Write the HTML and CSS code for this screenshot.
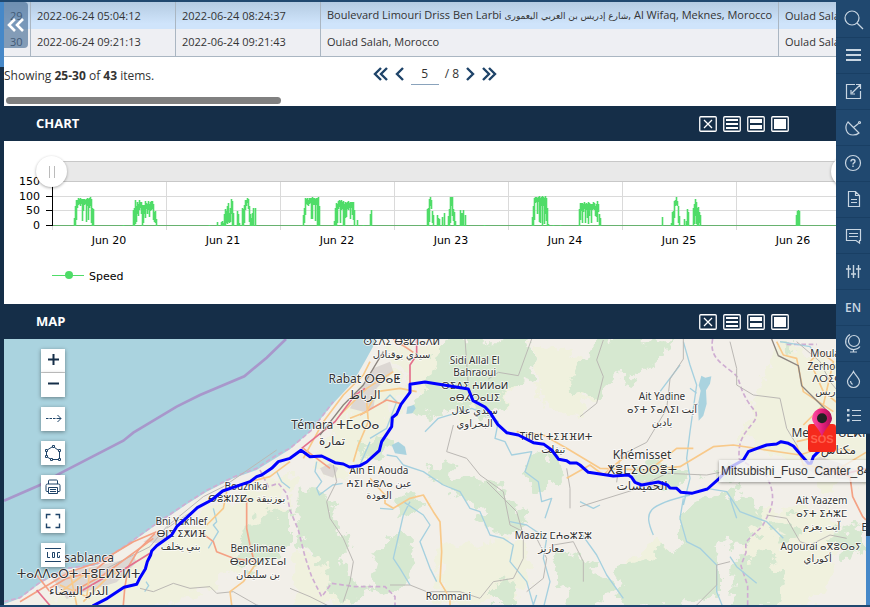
FILE: index.html
```html
<!DOCTYPE html>
<html lang="en">
<head>
<meta charset="utf-8">
<title>Trips report</title>
<link rel="stylesheet" href="styles.css">
</head>
<body>
<div class="app">
  <main class="content">
    <section class="report">
      <div class="table-wrap">
        <table class="trips">
          <colgroup><col class="c-num"><col class="c-time"><col class="c-time"><col class="c-address"><col class="c-address"></colgroup>
          <tbody>
            <tr class="selected"><td>29</td><td>2022-06-24 05:04:12</td><td>2022-06-24 08:24:37</td><td>Boulevard Limouri Driss Ben Larbi <span class="ar">شارع إدريس بن العربي اليعمورى</span>, Al Wifaq, Meknes, Morocco</td><td>Oulad Salah, Morocco</td></tr>
            <tr><td>30</td><td>2022-06-24 09:21:13</td><td>2022-06-24 09:21:43</td><td>Oulad Salah, Morocco</td><td>Oulad Salah, Morocco</td></tr>
          </tbody>
        </table>
      </div>
      <div class="table-foot">
        <p class="summary">Showing <b>25-30</b> of <b>43</b> items.</p>
        <nav class="pager" aria-label="Pages">
          <button aria-label="First page"><svg width="16" height="14"><path d="M8 1 2 7l6 6M14 1 8 7l6 6"/></svg></button>
          <button aria-label="Previous page"><svg width="10" height="14"><path d="M8 1 2 7l6 6"/></svg></button>
          <input type="text" value="5" aria-label="Page">
          <span>/ 8</span>
          <button aria-label="Next page"><svg width="10" height="14"><path d="m2 1 6 6-6 6"/></svg></button>
          <button aria-label="Last page"><svg width="16" height="14"><path d="m2 1 6 6-6 6M8 1l6 6-6 6"/></svg></button>
        </nav>
      </div>
      <div class="scroll-track"><div class="scroll-thumb"></div></div>
    </section>

    <header class="bar">
      <h2>CHART</h2>
      <div class="bar-tools">
        <button aria-label="Close chart"><svg width="18" height="16"><rect x=".75" y=".75" width="16.5" height="14.5" rx="1"/><path d="m5 4 8 8m0-8-8 8"/></svg></button>
        <button aria-label="Small chart"><svg width="18" height="16"><rect x=".75" y=".75" width="16.5" height="14.5" rx="1"/><path class="solid" d="M3 3h12v2H3zM3 7h12v2H3zM3 11h12v2H3z"/></svg></button>
        <button aria-label="Half chart"><svg width="18" height="16"><rect x=".75" y=".75" width="16.5" height="14.5" rx="1"/><path class="solid" d="M3 3h12v4H3zM3 9h12v4H3z"/></svg></button>
        <button aria-label="Full chart"><svg width="18" height="16"><rect x=".75" y=".75" width="16.5" height="14.5" rx="1"/><path class="solid" d="M3 3h12v10H3z"/></svg></button>
      </div>
    </header>
    <section class="chart">
      <svg class="plot" role="img" aria-label="Speed by day">
        <rect class="range" x="48" y="20" width="794" height="20"/>
        <path class="range-edge" d="M48 20.5H862M48 40.5H862"/>
        <path class="grid" d="M48 55.5H862M48 69.5H862M48.5 85v4M162.500 41v48M276.500 41v48M390.500 41v48M504.500 41v48M618.500 41v48M732.500 41v48"/>
        <path class="zero" d="M48 84.500H862"/>
        <path class="axis" d="M48.500 40V85M42 55.500h6M42 69.500h6M42 84.500h6"/>
        <g transform="translate(48.500 85) scale(1 -1)">
          <path class="speed" d="M22 0V8M23 0V20M24 6V26M25 18V26M26 21V28M27 22V27M28 20V28M29 22V27M30 5V27M31 15V27M32 21V27M33 22V26M34 4V27M35 20V28M36 6V27M37 18V28M38 20V29M39 3V27M40 0V18M41 0V17"/>
          <path class="speed" d="M71 0V1M81 0V16M82 0V18M83 2V26M84 4V20M85 12V24M86 10V22M87 16V26M88 18V24M89 12V24M90 0V21M91 3V21M92 12V21M93 8V25M94 17V23M95 12V22M96 16V25M97 9V22M98 15V24M99 16V25M100 17V25M101 6V22M102 4V14M103 3V15M104 0V7"/>
          <path class="speed" d="M157 0V1M165 0V4M169 0V4M170 0V5M171 0V3M172 0V12M173 0V17M174 3V15M175 2V20M176 4V23M177 3V13M178 4V18M179 12V27M180 0V25M181 0V13M185 0V15M186 0V12M187 0V3M190 0V18M191 0V17M192 3V21M193 16V26M194 20V26M195 23V28M196 17V27M197 4V20M198 0V12M199 0V8M200 0V13M201 0V18M203 0V18"/>
          <path class="speed" d="M251 0V11M252 3V18M253 11V28M254 22V27M255 21V28M256 20V26M257 22V28M258 23V28M259 7V28M260 7V29M261 21V28M262 21V28M263 5V27M264 21V28M265 0V28M266 0V29M267 0V20"/>
          <path class="speed" d="M282 0V5M283 0V18M284 0V23M285 3V22M286 17V25M287 19V26M288 3V25M289 16V26M290 17V24M291 0V25M292 0V22M293 8V24M294 9V23M295 17V24M296 16V25M297 18V23M298 7V24M299 18V24M300 11V24M301 6V24M302 0V16M305 0V6M311 0V1M318 0V12M319 0V16"/>
          <path class="speed" d="M375 0V17M376 0V18M377 4V27M378 20V29M379 17V26M380 3V15M381 0V11M385 0V11M386 0V8M387 0V7M390 0V9M392 0V13M396 0V10M397 0V17M398 3V29M399 20V29M400 10V29M401 5V17M402 0V14M403 0V5M408 0V16M409 0V13M410 0V13M411 0V16M413 0V11M432 0V1"/>
          <path class="speed" d="M480 0V9M481 0V20M482 6V28M483 23V29M484 24V29M485 12V28M486 24V29M487 4V30M488 3V28M489 20V29M490 0V30M491 20V29M492 2V28M493 12V30M494 5V28M495 0V18M496 0V2M501 0V1M508 0V1"/>
          <path class="speed" d="M527 0V17M528 6V23M529 15V23M530 3V23M531 14V22M532 17V24M533 3V22M534 16V23M535 8V22M536 2V24M537 10V23M538 16V22M539 3V22M540 16V22M541 17V24M542 16V23M543 10V20M544 9V22M545 4V25M546 14V22M547 0V12M548 0V8"/>
          <path class="speed" d="M610 0V9M619 0V3M620 0V14M621 0V15M622 8V25M623 20V26M624 21V29M625 20V25M626 3V20M627 0V10M632 0V7M634 0V5M635 0V17M636 0V14M641 0V18M642 2V22M643 10V27M644 2V24M645 0V18M646 0V19M647 3V14M648 0V11M744 0V11M745 0V15M746 0V16M747 0V15"/>
        </g>
        <g class="ticks-y"><text x="36" y="44">150</text><text x="36" y="59">100</text><text x="36" y="73">50</text><text x="36" y="88">0</text></g>
        <g class="ticks-x"><text x="105" y="103">Jun 20</text><text x="219" y="103">Jun 21</text><text x="333" y="103">Jun 22</text><text x="447" y="103">Jun 23</text><text x="561" y="103">Jun 24</text><text x="675" y="103">Jun 25</text><text x="789" y="103">Jun 26</text></g>
        <path class="legend-line" d="M48 134.500h32"/><circle class="dot" cx="65" cy="134" r="4"/>
        <text x="85" y="139">Speed</text>
      </svg>
      <button class="grip grip-start" aria-label="Range start"></button>
      <button class="grip grip-end" aria-label="Range end"></button>
    </section>

    <header class="bar">
      <h2>MAP</h2>
      <div class="bar-tools">
        <button aria-label="Close map"><svg width="18" height="16"><rect x=".75" y=".75" width="16.5" height="14.5" rx="1"/><path d="m5 4 8 8m0-8-8 8"/></svg></button>
        <button aria-label="Small map"><svg width="18" height="16"><rect x=".75" y=".75" width="16.5" height="14.5" rx="1"/><path class="solid" d="M3 3h12v2H3zM3 7h12v2H3zM3 11h12v2H3z"/></svg></button>
        <button aria-label="Half map"><svg width="18" height="16"><rect x=".75" y=".75" width="16.5" height="14.5" rx="1"/><path class="solid" d="M3 3h12v4H3zM3 9h12v4H3z"/></svg></button>
        <button aria-label="Full map"><svg width="18" height="16"><rect x=".75" y=".75" width="16.5" height="14.5" rx="1"/><path class="solid" d="M3 3h12v10H3z"/></svg></button>
      </div>
    </header>
    <section class="map">
      <svg class="map-canvas" viewBox="12 12 2586 798" preserveAspectRatio="xMinYMin slice" role="img" aria-label="Route map">
        <defs>
          <linearGradient id="pin" x1="0" x2="1"><stop offset="0" stop-color="#ff4fa3"/><stop offset=".55" stop-color="#e01e79"/><stop offset="1" stop-color="#a80f58"/></linearGradient>
          <filter id="soft"><feTurbulence type="fractalNoise" baseFrequency=".022" numOctaves="4" seed="4"/><feDisplacementMap in="SourceGraphic" scale="95" xChannelSelector="R" yChannelSelector="G"/></filter>
        </defs>
        <path class="land" d="M0 812 60 790 120 745 200 702 290 690 370 640 460 575 560 508 620 470 700 430 770 405 870 343 930 290 1000 205 1060 140 1100 70 1138 0H2620V830H0z"/>
        <g class="farm" filter="url(#soft)">
          <path d="M170 790 400 670 580 560 720 480 870 410 860 570 740 640 660 740 500 830H90zM940 360l124-170 100-90 60 60-60 120-80 100-100 60zM1150 30h280l120 60-40 110-120 40-140-70zM1600 20l130 30 60 120-60 80-100-40zM900 650l110 10 60 90-20 60H880zM1300 640l240-30 60 80-80 120h-200zM2340 20l260 100v320l-150 20-120-90-110-60z"/>
          <path d="M2210 540l260-20 60 90-90 210h-180zM1950 600l60 60-40 60-90-20z"/>
        </g>
        <g class="wood" filter="url(#soft)">
          <path d="M720 600l70-70 80 0v100l-60 20-60 60-50-40zM890 455l90 15 30 50-20 40 60 50-20 80 50 50-20 60-60-20-30-90-60-40-20-100zM1075 330l60-30 50 10-30 60-60 20zM1240 210l60-100 30-100h260l20 80-80 50-60 110-80-50-100 50zM1340 95l100-60 110 20 60 70-60 40-130 0z"/>
          <path d="M1180 500l60-30 30 40-60 40zM1290 390l140 50-30 60-60-30zM1370 420l150 40 60 110-70 40-80-80zM1580 370l80-20 40 70-70 60-60-50zM1130 660l70-70 50 50-20 100-80 40-50-20zM1020 760l60-30 20 40-50 40zM1470 740l60-20 20 90h-80zM1680 650l90 30 60 80-30 60h-80l-60-110z"/>
          <path d="M1750 60l90-50 180 0-40 60-70 70-60-20-60 70-90-20zM1890 390l110-20 80 60-90 40-90-30zM2050 520l70-40 60 10 40-30 60 70-20 90-80 0-40 60-90-20-30-80zM1860 700l120-40 70-30 110 30 0 100-80 60h-180l-60-60zM2200 670l100-20 60 90-40 80h-130zM2150 410l80-10-30 40zM2480 600l110-20 10 60-60 30zM2330 20l50 10-20 30zM2310 560l60-10 40 60-60 10z"/>
        </g>
        <g class="town"><path d="M150 720l70-15 60-10 90-20 30-15 10 22-60 60-100 30-50 20zM1050 220l30-60 40-60 50-20 10 30-50 50-10 60-30 10zM960 400l30-15 25 15-15 28-30-10zM430 620l50-30 40-10-40 45zM1920 440l60-5 20 25-50 5zM2400 390l60-25 60 20 50 20-20 30-90-10z"/></g>

        <g class="boundary"><path d="M12 800 60 788 120 742 200 700 290 688 370 636 460 572 560 504 620 466 700 426 770 400 830 360 870 340 935 285 1000 200M780 405l25 50 30-10 25 30 10 50 25 60 20 80 20 60 30 60 30-40 70 10 90 0 30 30v30M2138 12c-10 50 20 70 60 100 30 20 10 50 70 120 10 40-60 50-50 140l80 50c40 70 10 110-10 150-60 60-50 40-50 80l-15 40 20 60v60M2360 28l90 0"/></g>
        <path class="maritime" d="M12 497 120 450 180 415 370 317 400 293 530 215 600 180 733 124 800 68 858 12"/>
        <g class="water">
          <path d="M640 520l10 40-10 10 15 20-30 50M830 410l15 30 25 20M438 740l8 12-12 18"/>
          <path d="M950 380l-5 30 20 30-15 20 8 20 40-30 30-5M1275 290l40-40 100-30 50 20 30 20-10 50 30 10 20 40 60-10-20 60 40 30 10 60 30-10-20 60M1160 360l30 5 20 25 60 20 60 40 50 20 30 50 30 10 30 70 40 10 30 20-10 50 50 60 20 70 10-30M1230 500l-20 40-30 130 20 30 30 50M1210 500l60 40 20 30-30 50 30 80 20 40M1530 560l50 10 60 40-10 60 20 70-20 80M1140 520l40 3M1110 320l-30 70M1150 200l20-20 20 20-30 80-50 30"/>
          <path d="M2050 20l20 70 20 60-20 140-10 80 10 60-20 80M2040 90l-60 80M2070 160l20 15M1960 600c-30-70-20-90 110-120M2050 490l-10 60 20 70 40 20 50 50 0 80 20 50M2120 460l60 10 40 60 80 30 50 50M2190 490l20 60M2190 665l20 30 60 50M1740 590l50 70 30 60 50 70M1800 510l-20 10-40-20M2340 20l90 15 20 30"/>
        </g>
        <g class="lake"><path d="M2104 122l12 6 18-4-4 22-12 20 2 40-10 36-14 15-2-50 8-40-6-16zM1222 215l20-5 5 10-10 15-18 2zM1175 330l20-10 20 15 5 25-35-5z"/></g>
        <g class="minor">
          <path d="M300 710l90-45 60-30 50-60 110-90 60-30 160-110M500 580l120-80M420 760l40 10 60-25 50 15 60-5 20 20 50-5 70 40 40 10"/>
          <path d="M1000 390l10 50-30 60 10 50 40 60 30 70-10 60-20 60M870 760l60 25 60 30M1170 750l60 0 50 20 100 0 60 20 40-50 60-10 30-60 0-70-20-70-90-90M1395 12l10 140M1595 12l-40 110-60-10-30 20M1360 270l-20 80 60 20 40 50 70 50 20 100 80 40 30 60-10 60-50 40M1660 630l60-10 30 60 0 60M1700 400l10 60 0 60"/>
          <path d="M1810 15l-20 60 20 50-20 80-50 40M2050 12v60l-40 60-10 90-60 100-80 40-10 80M2190 20l20 80 0 50 50 30 80 10 20 90 30 50M1740 515l160-50 100-50 120 5 50-10M2300 540l60 10 40 70 30 10 60-30 50 10M2150 690l0 60-60 60M2150 690l40-10M2540 200l-50-60-30-60-70-60"/>
        </g>
        <g class="roads">
          <path class="primary" d="M370 810l5-60M375 755l10-60 30-50 50-50M600 590l40 30 10 30 50 20 70 10M740 490v90l10 50 15 60M150 770l-40-50M1080 240l80-45 40 10M1180 12l60 40M910 340l80 60M2500 405l50 20 8 60 30 60 10 10"/>
          <path class="primary" d="M60 800l150-90 90-30 100-60 70-30M200 780l110-60 150-110M150 760l50-30 80-20 60-50"/>
          <path class="secondary" d="M765 690l-35 50-40 30 5 40M620 570l50-50 10-50M750 440l60-15 60-45M1060 380l15-50 30-70-5-60M1110 430l45 50 0 25 25 15 50-30 40-10 30 50 20 30 5 90-5 90 30 50v40M1700 430l70-40 40 30 70-60"/>
          <path class="secondary" d="M1550 290l80 10 70 40 100 60 130 5 110-10 100-60 60-5 200 30 60-20 90 5M1930 420l100-80 50 0M2390 320l130-30 60 0M2390 330l20 60 100 15 100-60M2520 210l-50-40-40-90 30-30 40 30-30 130-60 60M2330 20l20 40 40 10 20 100 90 60"/>
          <path class="secondary" d="M170 780l80-60 50 10 60-20M180 750l90 40M210 710l20 100M270 700l-10 90M350 700l-100 100M910 370l60-110 60-80 60-60 20-40M1020 240l80-80 80-50M1050 250l50-20 30-60 70-10 50 10"/>
          <path class="motorway" d="M110 765l60 70M360 710l90-55M240 770l70-40M905 340l100-80 60-80 30-20M1230 150v-60l20-30 0-50M2480 400l40 20 80-20"/>
        </g>
        <g class="rail"><path d="M2315 12l20 50 60 30 10 60 50 50 30 30M1150 50l-60 100-60 60-70 90"/></g>

        <g class="label">
          <text class="city" x="246" y="680">Casablanca</text><text class="city" x="236" y="729">ⵜⴰⴷⴷⴰⵔⵜ ⵜⵓⵎⵍⵉⵍⵜ</text><text class="city" x="236" y="780">الدار البيضاء</text>
          <text x="544" y="570">Bni Yakhlef</text><text x="544" y="607">ⴱⵏⵉ ⵉⵅⵍⴼ</text><text x="542" y="645">بني يخلف</text>
          <text x="738" y="464">Bouznika</text><text x="740" y="501">ⴱⵓⵣⵏⵉⵇⴰ بوزنيقة</text>
          <text x="774" y="652">Benslimane</text><text x="774" y="690">ⴱⴰⵏⵙⵍⵉⵎⴰⵏ</text><text x="774" y="728">بن سليمان</text>
          <text x="1205" y="31">ⵙⵉⴷⵉ ⴱⵓⵇⵏⴰⴷⵍ</text><text x="1205" y="70">سيدي بوقنادل</text>
          <text class="city" x="1094" y="143">Rabat ⵔⴱⴰⵟ</text><text class="city" x="1094" y="193">الرباط</text>
          <text class="city" x="1006" y="283">Témara ⵜⵎⴰⵔⴰ</text><text class="city" x="996" y="330">تمارة</text>
          <text x="1137" y="416">Ain El Aouda</text><text x="1137" y="455">ⵄⵉⵏ ⵄⵓⴷⴰ عين</text><text x="1137" y="492">العودة</text>
          <text x="1424" y="86">Sidi Allal El</text><text x="1424" y="124">Bahraoui</text><text x="1424" y="162">ⵙⵉⴷⵉ ⵄⵍⵍⴰⵍ</text><text x="1424" y="199">ⴰⴱⵃⵔⴰⵡⵉ</text><text x="1424" y="237">سيدي علال</text><text x="1424" y="276">البحراوي</text>
          <text x="1668" y="315">Tiflet ⵜⵉⴼⴼⵍⵜ</text><text x="1660" y="354">تيفلت</text>
          <text class="city" x="1926" y="373">Khémisset</text><text class="city" x="1926" y="418">ⵅⴻⵎⵉⵙⵙⴻⵜ</text><text class="city" x="1926" y="466">الخميسات</text>
          <text x="1986" y="196">Ait Yadine</text><text x="1986" y="234">ⴰⵢⵜ ⵢⴰⴷⵉⵏ آيت</text><text x="1986" y="272">يادين</text>
          <text x="1660" y="612">Maaziz ⵎⵄⴰⵣⵉⵣ</text><text x="1654" y="651">معازيز</text>
          <text x="1345" y="794">Rommani</text>
          <text x="2483" y="66">Moulay</text><text x="2483" y="104">Zerhoun</text><text x="2483" y="141">ⴷⵔⵉⵙ</text><text x="2483" y="181">دريس</text>
          <text class="city" x="2513" y="307">Meknes ⴰⵎⴽⵏⴰⵙ</text><text class="city" x="2515" y="358">مكناس</text>
          <text x="2465" y="508">Ait Yaazem</text><text x="2465" y="547">ⴰⵢⵜ ⵉⵄⵣⵎ</text><text x="2465" y="585">آيت يعزم</text>
          <text x="2463" y="644">Agourai ⴰⴳⵓⵔⴰⵢ</text><text x="2453" y="682">أكوراي</text><text x="2597" y="587">El</text>
        </g>
        <path class="route" d="M280 812 322 790 372 757 410 748 420 728 436 702 442 680 452 660 455 648 470 632 515 600 530 575 560 548 592 518 635 495 668 468 750 440 770 425 785 420 815 400 835 380 870 370 903 346 930 365 965 363 1005 383 1030 387 1048 396 1080 392 1100 381 1138 347 1145 320 1175 275 1177 248 1190 237 1203 208 1230 172 1230 148 1275 141 1350 153 1405 162 1419 197 1455 216 1470 232 1493 268 1520 293 1555 300 1600 323 1632 328 1655 345 1676 373 1700 377 1710 384 1730 384 1740 390 1765 412 1840 423 1885 420 1895 427 1905 442 1925 450 1975 441 2002 450 2010 459 2030 460 2043 472 2075 475 2122 462 2158 430 2185 400 2230 375 2245 350 2300 330 2330 327 2343 320 2365 325 2380 333 2405 362 2425 385 2433 385 2440 365 2465 340"/>
        <rect x="2424" y="267" width="84" height="84" rx="10" fill="#f52a1c"/>
        <text class="sos" x="2466" y="324">SOS</text>
        <path fill="url(#pin)" d="M2466 306c-6-24-30-38-30-56a30 30 0 0 1 60 0c0 18-24 32-30 56z"/>
        <circle cx="2466" cy="250" r="15" fill="#222"/>
      </svg>
      <div class="vehicle-tip">Mitsubishi_Fuso_Canter_8497</div>
      <div class="map-tools">
        <div class="zoom"><button aria-label="Zoom in"><svg><path class="thick" d="M7 10.500h11M12.500 5v11"/></svg></button><button aria-label="Zoom out"><svg><path class="thick" d="M7 10.500h11"/></svg></button></div>
        <button aria-label="Measure"><svg><path d="M5 11.500h2.500m1 0H11m1 0h2.500m1 0H20M16.500 8l3.500 3.500-3.500 3.500"/></svg></button>
        <button aria-label="Draw area"><svg><path d="M11 6 7 8.500M5.500 11v3M7 16.500 9.500 18M12 18.500h5M18.500 17v-6M17 9l-3.500-2.500"/><path d="M11.500 4.500h2v2h-2zM4.500 8.500h2v2h-2zM17.500 8.500h2v2h-2zM4.500 14.500h2v2h-2zM9.500 17.500h2v2h-2zM17.500 17.500h2v2h-2z"/></svg></button>
        <button aria-label="Print"><svg><path d="M7.500 9V6q0-1 1-1h7q1 0 1 1v3M7 16.500H6q-1 0-1-1v-5Q5 9 6.500 9h11q1.500 0 1.500 1.500v5q0 1-1 1h-1M7.500 12.500h9v6h-9zM9 14.500h6M9 16.500h6"/></svg></button>
        <button aria-label="Full screen"><svg><path class="mid" d="M5.500 9.500v-4h4M14.500 5.500h4v4M18.500 14.500v4h-4M9.500 18.500h-4v-4"/></svg></button>
        <button aria-label="Log"><svg><path d="M4 5.500h16M4 18.500h16"/><path d="M6.500 9v5.500H9M11.500 9.500h2v5h-2zM19 9.500h-2.500v5h2v-2"/></svg></button>
      </div>
    </section>
  </main>

  <button class="collapse" aria-label="Collapse panel"><svg width="18" height="16"><path d="M8 2 2 8l6 6M16 2l-6 6 6 6"/></svg></button>

  <aside class="side">
    <button aria-label="Search"><svg><circle cx="8" cy="8" r="7"/><path d="m13 13 6 6"/></svg></button>
    <button aria-label="Menu"><svg><path class="fat" d="M2 4h15M2 9h15M2 14h15"/></svg></button>
    <button aria-label="Open window"><svg><path d="M11 2.500H2.500v14h14V9M8 11l8-8M12 2.500h4.500V7M7 8v4h4"/></svg></button>
    <button aria-label="Tracking"><svg><path d="M4 4C0 9 2 17 9 17c3 0 5-1 6-2zM9.500 9.500l5-4"/><circle cx="15.500" cy="4.500" r="1"/></svg></button>
    <button aria-label="Help"><svg><circle cx="9" cy="9" r="7.500"/><path class="mid" d="M7 7.500q0-2 2-2t2 1.700q0 1-1 1.600-1 .7-1 1.700M9 11.500v1.500"/></svg></button>
    <button aria-label="Reports"><svg><path d="M4.500 1.500h7l4 4v11h-11zM11.500 1.500v4h4M7 9.500h6M7 12.500h6"/></svg></button>
    <button aria-label="Messages"><svg><path d="M2.500 3.500h14v11h-1V17L12 14.500H2.500zM5 7.500h9M5 10.500h9"/></svg></button>
    <button aria-label="Settings"><svg><path class="mid" d="M4.500 3v13M9.500 3v13M14.500 3v13M2 7h5M7 12h5M12 7h5"/></svg></button>
    <button>EN</button>
    <button aria-label="Map layers"><svg><circle cx="10" cy="7" r="5.500"/><path d="M6 .5a8 8 0 1 0 10 12M9.500 15v3M6 18h7"/></svg></button>
    <button aria-label="Fuel"><svg><path d="M9.500 1.500C8 5 3.500 8 3.500 11.500a6 6 0 0 0 12 0C15.500 8 11 5 9.500 1.500zM6.500 11q0 2 2 3.500"/></svg></button>
    <button aria-label="List"><svg><path d="M8 4.500h9M8 9.500h9M8 14.500h9"/><path class="solid" d="M3 3h2.500v2.500H3zM3 8h2.500v2.500H3zM3 13h2.500v2.500H3z"/></svg></button>
  </aside>
</div>
</body>
</html>
```
FILE: styles.css
```css
* { box-sizing: border-box; }

body {
  margin: 0;
  background: #152e48;
  color: #333;
  font: 12px/16px "Open Sans", "DejaVu Sans", sans-serif;
}

h2, p { margin: 0; }

button {
  display: grid;
  place-items: center;
  margin: 0;
  padding: 0;
  border: 0;
  background: none;
  color: inherit;
  font: inherit;
}

svg {
  display: block;
  fill: none;
}

.app {
  position: relative;
  display: flex;
  flex-direction: column;
  min-height: 100vh;
  overflow: hidden;
  border: solid #20486f;
  border-width: 2px 0;
  background:
    linear-gradient(#4688c8, #4688c8) left top / 4px 65px no-repeat,
    linear-gradient(#4688c8, #4688c8) right bottom / 4px 69px no-repeat,
    #152e48;
}

.content {
  display: flex;
  flex: 1;
  flex-direction: column;
  min-width: 0;
  margin: 0 4px;
}

/* Trips table */
.report {
  background: #fff;
  overflow: hidden;
}

.table-wrap { overflow: hidden; }

.trips {
  width: 1233px;
  table-layout: fixed;
  border-spacing: 0;
  font-size: 11px;
  white-space: nowrap;
}

.c-num { width: 27px; }
.c-time { width: 145px; }
.c-address { width: 458px; }

.trips td {
  height: 27px;
  padding: 0 6px;
  overflow: hidden;
  border-right: 1px solid #aab6c2;
  background: #eeeff3;
}

.trips .selected td { background: linear-gradient(#b4cbe2, #cfe4fb 80%); }

.trips tr:last-child td {
  height: 28px;
  padding-bottom: 2px;
  border-bottom: 1px solid #aab6c2;
}

.ar { font-family: "DejaVu Sans", sans-serif; font-size: 9px; }

.table-foot {
  display: grid;
  grid-template-columns: 1fr auto 1fr;
  align-items: center;
  height: 38px;
}

.pager {
  display: flex;
  align-items: center;
  gap: 6px;
  padding-bottom: 4px;
}

.pager svg { stroke: #1f4469; stroke-width: 2.4; }

.pager input {
  width: 28px;
  height: 22px;
  padding: 0;
  border: 0;
  border-bottom: 1px solid #8aa3bc;
  background: none;
  color: inherit;
  font: inherit;
  text-align: center;
}

.scroll-track { padding: 2px; }

.scroll-thumb {
  width: 32%;
  height: 7px;
  border-radius: 4px;
  background: #808080;
}

/* Section bars */
.bar {
  display: flex;
  align-items: center;
  justify-content: space-between;
  height: 35px;
  padding: 0 77px 0 32px;
  background: #152e48;
  color: #fff;
}

.bar h2 { padding-bottom: 2px; font-size: 13px; line-height: 18px; }
.bar-tools { display: flex; gap: 6px; }
.bar-tools svg { stroke: #fff; stroke-width: 1.3; }
.solid { fill: #fff; stroke: none; }

/* Speed chart */
.chart {
  position: relative;
  height: 163px;
  overflow: hidden;
  background: #fff;
}

.plot {
  width: 100%;
  height: 100%;
  font: 11px "DejaVu Sans", sans-serif;
}

.plot text { fill: #000; }
.range { fill: #e9e9e9; }
.range-edge { stroke: #c8c8c8; }
.grid { stroke: #dadada; }
.zero { stroke: #67b26f; }
.axis { stroke: #000; }
.speed { stroke: #4fdc68; stroke-width: 1.6; }
.legend-line { stroke: #4fdc68; }
.dot { fill: #4fdc68; }
.ticks-y { text-anchor: end; }
.ticks-x { text-anchor: middle; }

.grip {
  position: absolute;
  top: 15px;
  width: 31px;
  height: 31px;
  border-radius: 50%;
  background: #fff;
  box-shadow: 0 1px 3px #0005;
}

.grip::before {
  width: 4px;
  height: 12px;
  border: solid #bbb;
  border-width: 0 1px;
  content: "";
}

.grip-start { left: 32px; }
.grip-end { right: 4px; }

/* Map */
.map {
  position: relative;
  flex: 1;
  min-height: 266px;
  overflow: hidden;
  background: #aad3df;
}

.map-canvas {
  position: absolute;
  width: 100%;
  height: 100%;
}

.land { fill: #f2efe9; }
.farm { fill: #f0f1de; }
.wood { fill: #d6e8d0; }
.town { fill: #dcd7d3; }
.boundary { stroke: #cfadd2; stroke-width: 5; stroke-dasharray: 14 8; }
.maritime { stroke: #a897cb; stroke-width: 8; }
.water { stroke: #a5d0df; stroke-width: 4; stroke-linejoin: round; }
.lake { fill: #aad3df; }
.minor { stroke: #bbb8b4; stroke-width: 3; stroke-linejoin: round; }
.primary { stroke: #f4a184; stroke-width: 5; stroke-linejoin: round; }
.secondary { stroke: #f8c98a; stroke-width: 5; stroke-linejoin: round; }
.motorway { stroke: #e4718d; stroke-width: 5; }
.rail { stroke: #8c8580; stroke-width: 4; }
.route { stroke: #00f; stroke-width: 9; stroke-linecap: round; stroke-linejoin: round; }

.label {
  fill: #333;
  stroke: #fffc;
  stroke-width: 5;
  stroke-linejoin: round;
  paint-order: stroke;
  font: 30px "Noto Sans", "DejaVu Sans", sans-serif;
  text-anchor: middle;
}

.label .city { font-size: 36px; }

.sos {
  fill: #ff604c;
  font: bold 33px "Liberation Sans", sans-serif;
  text-anchor: middle;
}

.vehicle-tip {
  position: absolute;
  top: 121px;
  left: 715px;
  padding: 3px 2px;
  background: #f4f4f4c4;
  box-shadow: 0 1px 3px #0006;
  font: 12px/16px "Liberation Sans", sans-serif;
  white-space: nowrap;
}

.map-tools {
  position: absolute;
  top: 10px;
  left: 37px;
  display: grid;
  gap: 10px;
}

.map-tools button {
  width: 24px;
  height: 24px;
  background: #fff;
  box-shadow: 0 1px 4px #0006;
}

.map-tools svg { width: 24px; height: 24px; stroke: #1f4469; }
.zoom button:first-child { border-bottom: 1px solid #ccc; }
.mid { stroke-width: 1.4; }
.map-tools .thick { stroke: #152e48; stroke-width: 2; }

/* Overlays */
.collapse {
  position: absolute;
  top: 0;
  left: 4px;
  width: 24px;
  height: 46px;
  border-radius: 0 4px 4px 0;
  background: #4a6f96a6;
}

.collapse svg { stroke: #fff; stroke-width: 2.6; }

.side {
  position: absolute;
  top: 0;
  right: 0;
  width: 34px;
  background: #20486f;
  color: #c9d6e2;
  font-size: 12px;
  font-weight: 600;
}

.side button {
  width: 100%;
  height: 36px;
  border-bottom: 1px solid #193f64;
}

.side svg {
  width: 19px;
  height: 19px;
  overflow: visible;
  stroke: #c9d6e2;
  stroke-width: 1.2;
}

.side .fat { stroke-width: 2; }
.side .solid { fill: #c9d6e2; stroke: none; }
```
